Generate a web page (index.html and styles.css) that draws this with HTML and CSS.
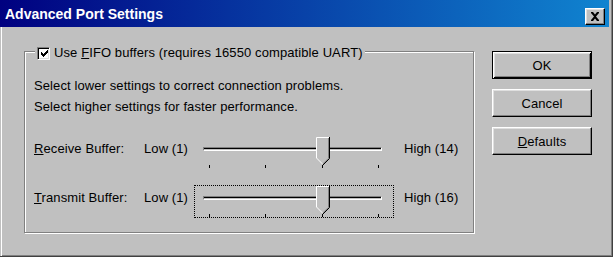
FILE: index.html
```html
<!DOCTYPE html>
<html>
<head>
<meta charset="utf-8">
<link rel="stylesheet" href="styles.css">
</head>
<body>
<div class="window">
  <div class="titlebar">
    <span class="title">Advanced Port Settings</span>
    <span class="close"><svg width="10" height="9" viewBox="0 0 10 9"><path d="M1 0h2l2 2.5L7 0h2v1L6 4.5 9 8v1H7L5 6.5 3 9H1V8l3-3.5L1 1z" fill="#000"/></svg></span>
  </div>
  <div class="content">
    <div class="group">
      <div class="legend">
        <span class="checkbox"><svg width="7" height="7" viewBox="0 0 7 7"><path d="M0 2h1v1h1v1h1V3h1V2h1V1h1V0h1v3H6v1H5v1H4v1H3v1H2V6H1V5H0z" fill="#000"/></svg></span>
        <span class="legend-text">Use <u>F</u>IFO buffers (requires 16550 compatible UART)</span>
      </div>
      <p class="info">Select lower settings to correct connection problems.<br>Select higher settings for faster performance.</p>
      <div class="row first">
        <span class="label"><u>R</u>eceive Buffer:</span>
        <span class="low">Low (1)</span>
        <div class="slider">
          <div class="track"></div>
          <div class="ticks"><i></i><i></i><i></i><i></i></div>
          <svg class="thumb" width="15" height="28" viewBox="0 0 15 28"><polygon points="0,0 14,0 14,21 7,28 0,21" fill="#c0c0c0"/><polyline points="0.5,21 0.5,0.5 13.5,0.5" fill="none" stroke="#fff"/><polyline points="12.5,1 12.5,21.3 6.8,27" fill="none" stroke="#808080"/><polyline points="13.5,0 13.5,21.5 7,28" fill="none" stroke="#000"/><polyline points="0.5,21 6.5,27" fill="none" stroke="#fff"/></svg>
        </div>
        <span class="high">High (14)</span>
      </div>
      <div class="row">
        <span class="label"><u>T</u>ransmit Buffer:</span>
        <span class="low">Low (1)</span>
        <div class="slider focus">
          <div class="track"></div>
          <div class="ticks"><i></i><i></i><i></i><i></i></div>
          <svg class="thumb" width="15" height="28" viewBox="0 0 15 28"><polygon points="0,0 14,0 14,21 7,28 0,21" fill="#c0c0c0"/><polyline points="0.5,21 0.5,0.5 13.5,0.5" fill="none" stroke="#fff"/><polyline points="12.5,1 12.5,21.3 6.8,27" fill="none" stroke="#808080"/><polyline points="13.5,0 13.5,21.5 7,28" fill="none" stroke="#000"/><polyline points="0.5,21 6.5,27" fill="none" stroke="#fff"/></svg>
        </div>
        <span class="high">High (16)</span>
      </div>
    </div>
    <div class="buttons">
      <button class="btn default">OK</button>
      <button class="btn">Cancel</button>
      <button class="btn"><u>D</u>efaults</button>
    </div>
  </div>
</div>
</body>
</html>
```
FILE: styles.css
```css
html, body {
  margin: 0;
  padding: 0;
  background: #c0c0c0;
}
.window {
  width: 613px;
  height: 257px;
  box-sizing: border-box;
  background: #c0c0c0;
  display: flex;
  flex-direction: column;
  border-right: 1px solid #404040;
  border-bottom: 1px solid #404040;
  box-shadow: inset -1px -1px #808080;
  font-family: "Liberation Sans", Arial, sans-serif;
  font-size: 13px;
  letter-spacing: 0.1px;
  color: #000;
}
.titlebar {
  height: 27px;
  box-sizing: border-box;
  padding: 3px 4px 0 5px;
  margin-right: 3px;
  background: linear-gradient(90deg, #000080 0%, #1084d0 100%);
  display: flex;
  align-items: center;
}
.title {
  flex: 1;
  color: #fff;
  font-weight: bold;
  font-size: 14px;
  letter-spacing: 0;
  line-height: 16px;
  margin-top: -2px;
}
.close {
  width: 20px;
  height: 17px;
  box-sizing: border-box;
  background: #c0c0c0;
  border: 1px solid;
  border-color: #fff #000 #000 #fff;
  box-shadow: inset -1px -1px #808080, inset 1px 1px #dfdfdf;
  display: flex;
  align-items: center;
  justify-content: center;
  margin-top: 2px;
}
.content {
  flex: 1;
  display: flex;
  align-items: flex-start;
  padding: 24px 0 0 24px;
  box-shadow: inset 1px 0 #c0c0c0, inset 2px 0 #fff;
}
.group {
  position: relative;
  width: 448px;
  height: 180px;
  border: 1px solid #808080;
  box-shadow: inset 1px 1px #fff, 1px 1px #fff;
}
.legend {
  position: absolute;
  left: 10px;
  top: -7px;
  display: flex;
  align-items: center;
  gap: 4px;
  padding: 0 2px;
  background: #c0c0c0;
}
.checkbox {
  width: 13px;
  height: 13px;
  box-sizing: border-box;
  background: #fff;
  border: 1px solid;
  border-color: #808080 #fff #fff #808080;
  box-shadow: inset 1px 1px #000, inset -1px -1px #dfdfdf;
  display: flex;
  align-items: center;
  justify-content: center;
}
.checkbox svg {
  margin: 1px 0 0 1px;
}
.legend-text {
  line-height: 16px;
}
.info {
  margin: 23px 0 0 9px;
  line-height: 21px;
}
.row {
  display: flex;
  align-items: flex-start;
  height: 33px;
  margin: 16px 0 0 9px;
}
.row.first {
  margin-top: 19px;
}
.label, .low, .high {
  line-height: 21px;
  padding-top: 2px;
}
.label {
  width: 110px;
}
.low {
  width: 50px;
}
.high {
  margin-left: 10px;
}
.slider {
  position: relative;
  width: 200px;
  height: 33px;
  box-sizing: border-box;
  border: 1px dotted transparent;
}
.slider.focus {
  border-color: #000;
}
.track {
  width: 177px;
  height: 2px;
  margin: 10px 0 0 8px;
  border: 1px solid;
  border-color: #808080 #fff #fff #808080;
  box-shadow: inset 0 1px #000, inset 0 -1px #c0c0c0;
}
.ticks {
  display: flex;
  justify-content: space-between;
  width: 170px;
  margin: 14px 0 0 14px;
}
.ticks i {
  display: block;
  width: 1px;
  height: 3px;
  background: #000;
}
.thumb {
  position: absolute;
  left: 121px;
  top: 0px;
}
.buttons {
  display: flex;
  flex-direction: column;
  gap: 10px;
  margin-left: 18px;
}
.btn {
  width: 100px;
  height: 28px;
  box-sizing: border-box;
  background: #c0c0c0;
  font-family: "Liberation Sans", Arial, sans-serif;
  font-size: 13px;
  letter-spacing: 0.1px;
  color: #000;
  padding: 0;
  border: 1px solid;
  border-color: #fff #000 #000 #fff;
  box-shadow: inset -1px -1px #808080, inset 1px 1px #dfdfdf;
}
.btn.default {
  border-color: #000;
  box-shadow: inset 1px 1px #fff, inset -1px -1px #000, inset 2px 2px #dfdfdf, inset -2px -2px #808080;
}
```
